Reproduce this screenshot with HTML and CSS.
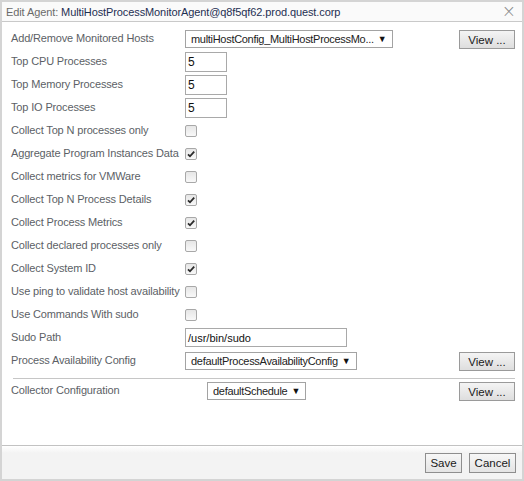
FILE: index.html
```html
<!DOCTYPE html>
<html>
<head>
<meta charset="utf-8">
<link rel="stylesheet" href="styles.css">
</head>
<body>
<div class="dialog">
  <div class="titlebar">
    <span class="title"><span class="title-pre">Edit Agent:</span> MultiHostProcessMonitorAgent@q8f5qf62.prod.quest.corp</span>
    <span class="close">×</span>
  </div>
  <div class="content">
    <div class="form">
      <div class="label">Add/Remove Monitored Hosts</div>
      <div class="ctl"><div class="select"><span class="sel-text">multiHostConfig_MultiHostProcessMo...</span><span class="arrow">▼</span></div></div>
      <div class="act"><div class="btn view">View ...</div></div>

      <div class="label">Top CPU Processes</div>
      <div class="ctl"><div class="input num">5</div></div>
      <div class="act"></div>

      <div class="label">Top Memory Processes</div>
      <div class="ctl"><div class="input num">5</div></div>
      <div class="act"></div>

      <div class="label">Top IO Processes</div>
      <div class="ctl"><div class="input num">5</div></div>
      <div class="act"></div>

      <div class="label">Collect Top N processes only</div>
      <div class="ctl"><div class="cb"></div></div>
      <div class="act"></div>

      <div class="label">Aggregate Program Instances Data</div>
      <div class="ctl"><div class="cb checked"><svg viewBox="0 0 12 12" width="12" height="12"><path d="M3 6.3 L5 8.3 L9.2 3.6" fill="none" stroke="#2a2a2a" stroke-width="1.8"/></svg></div></div>
      <div class="act"></div>

      <div class="label">Collect metrics for VMWare</div>
      <div class="ctl"><div class="cb"></div></div>
      <div class="act"></div>

      <div class="label">Collect Top N Process Details</div>
      <div class="ctl"><div class="cb checked"><svg viewBox="0 0 12 12" width="12" height="12"><path d="M3 6.3 L5 8.3 L9.2 3.6" fill="none" stroke="#2a2a2a" stroke-width="1.8"/></svg></div></div>
      <div class="act"></div>

      <div class="label">Collect Process Metrics</div>
      <div class="ctl"><div class="cb checked"><svg viewBox="0 0 12 12" width="12" height="12"><path d="M3 6.3 L5 8.3 L9.2 3.6" fill="none" stroke="#2a2a2a" stroke-width="1.8"/></svg></div></div>
      <div class="act"></div>

      <div class="label">Collect declared processes only</div>
      <div class="ctl"><div class="cb"></div></div>
      <div class="act"></div>

      <div class="label">Collect System ID</div>
      <div class="ctl"><div class="cb checked"><svg viewBox="0 0 12 12" width="12" height="12"><path d="M3 6.3 L5 8.3 L9.2 3.6" fill="none" stroke="#2a2a2a" stroke-width="1.8"/></svg></div></div>
      <div class="act"></div>

      <div class="label">Use ping to validate host availability</div>
      <div class="ctl"><div class="cb"></div></div>
      <div class="act"></div>

      <div class="label">Use Commands With sudo</div>
      <div class="ctl"><div class="cb"></div></div>
      <div class="act"></div>

      <div class="label">Sudo Path</div>
      <div class="ctl"><div class="input path">/usr/bin/sudo</div></div>
      <div class="act"></div>

      <div class="label">Process Availability Config</div>
      <div class="ctl"><div class="select"><span class="sel-text">defaultProcessAvailabilityConfig</span><span class="arrow">▼</span></div></div>
      <div class="act"><div class="btn view">View ...</div></div>
    </div>
    <div class="sep"></div>
    <div class="form">
      <div class="label">Collector Configuration</div>
      <div class="ctl ctl-indent"><div class="select"><span class="sel-text">defaultSchedule</span><span class="arrow">▼</span></div></div>
      <div class="act"><div class="btn view">View ...</div></div>
    </div>
  </div>
  <div class="footer">
    <div class="btn fbtn save">Save</div>
    <div class="btn fbtn cancel">Cancel</div>
  </div>
</div>
</body>
</html>
```

FILE: styles.css
```css
html, body {
  margin: 0;
  padding: 0;
  background: #ffffff;
}
body {
  font-family: "Liberation Sans", Arial, sans-serif;
  font-size: 11px;
}
.dialog {
  box-sizing: border-box;
  width: 524px;
  height: 481px;
  border: 2px solid #d4d4d4;
  display: flex;
  flex-direction: column;
  background: #fff;
}
.titlebar {
  height: 19px;
  border-bottom: 1px solid #c9c9c9;
  background: #fafafa;
  display: flex;
  align-items: center;
  justify-content: space-between;
  padding: 0 6px 0 4px;
}
.title {
  color: #1e2f52;
  font-size: 11px;
  letter-spacing: -0.1px;
}
.title-pre {
  color: #6a6a6a;
}
.close {
  color: #8a8a8a;
  font-size: 17px;
  line-height: 1;
  font-family: "DejaVu Sans", sans-serif;
  font-weight: 300;
}
.content {
  flex: 1;
  padding: 5px 7px 0 9px;
}
.form {
  display: grid;
  grid-template-columns: 174px 1fr auto;
  grid-auto-rows: 23px;
}
.label {
  color: #5c5f66;
  display: flex;
  align-items: center;
  padding-bottom: 2px;
  white-space: nowrap;
  letter-spacing: -0.15px;
}
.ctl {
  display: flex;
  align-items: center;
}
.ctl-indent {
  padding-left: 22px;
}
.act {
  display: flex;
  align-items: center;
}
.select {
  box-sizing: border-box;
  height: 18px;
  border: 1px solid #a3a3a3;
  background: #fff;
  display: flex;
  align-items: center;
  padding: 0 5px 0 5px;
  color: #222;
  font-size: 11px;
  white-space: nowrap;
}
.sel-text {
  letter-spacing: -0.3px;
}
.arrow {
  flex: none;
  font-size: 9px;
  color: #111;
  margin-left: 4px;
}
.input {
  box-sizing: border-box;
  height: 20px;
  border: 1px solid #a9a9a9;
  background: #fff;
  display: flex;
  align-items: center;
  padding-left: 2px;
  color: #111;
  font-size: 12px;
}
.num { width: 42px; margin-top: 1px; }
.path { width: 162px; height: 19px; font-size: 11px; }
.cb {
  box-sizing: border-box;
  width: 12px;
  height: 12px;
  border: 1px solid #a8a8a8;
  border-radius: 2px;
  background: linear-gradient(#e6e6e6, #f8f8f8);
  margin-top: 1px;
  position: relative;
}
.cb svg {
  position: absolute;
  left: -1px;
  top: -1px;
}
.btn {
  box-sizing: border-box;
  border: 1px solid #9a9a9a;
  background: linear-gradient(#f4f4f4, #dedede);
  color: #1a1a1a;
  font-size: 11.5px;
  display: flex;
  align-items: center;
  justify-content: center;
}
.view {
  width: 56px;
  height: 19px;
  margin-top: 2px;
}
.sep {
  height: 1px;
  background: #c6c6c6;
  margin: 6px 0 0 2px;
}
.footer {
  height: 33px;
  border-top: 1px solid #c2c2c2;
  background: linear-gradient(#ffffff 0px, #f3f3f3 7px, #f3f3f3 100%);
  display: flex;
  justify-content: flex-end;
  align-items: center;
  gap: 7px;
  padding-right: 6px;
}
.fbtn {
  height: 20px;
  background: linear-gradient(#f7f7f7, #e4e4e4);
  border-color: #8e8e8e;
}
.save { width: 37px; }
.cancel { width: 47px; }
```
